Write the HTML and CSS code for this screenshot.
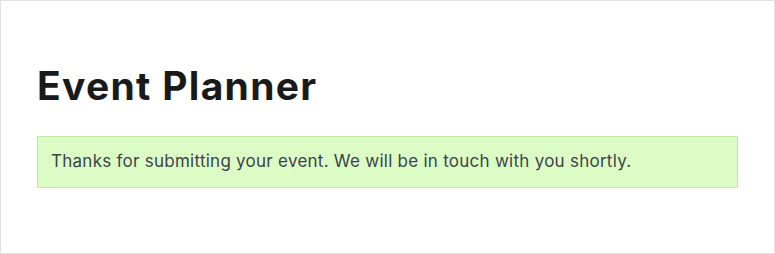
FILE: index.html
```html
<!DOCTYPE html>
<html lang="en">
<head>
<meta charset="utf-8">
<title>Event Planner</title>
<link rel="stylesheet" href="styles.css">
</head>
<body>
<div class="frame">
  <main class="content">
    <h1 class="title">Event Planner</h1>
    <div class="notice">Thanks for submitting your event. We will be in touch with you shortly.</div>
  </main>
</div>
</body>
</html>
```
FILE: styles.css
```css
html, body {
  margin: 0;
  padding: 0;
  height: 100%;
  background: #ffffff;
}
body {
  font-family: Inter, "Noto Sans", sans-serif;
}
.frame {
  box-sizing: border-box;
  height: 254px;
  border: 1px solid #e2e2e2;
  background: #ffffff;
}
.content {
  padding: 61px 36px 0 36px;
}
.title {
  margin: 0 0 26px 0;
  font-size: 39px;
  line-height: 48px;
  font-weight: 650;
  color: #1a1a1a;
  letter-spacing: 1.3px;
}
.notice {
  box-sizing: border-box;
  height: 52px;
  padding: 11px 13px;
  background: #dcfcc6;
  border: 1px solid #c2e8a8;
  color: #3c434a;
  font-size: 17px;
  line-height: 26px;
  letter-spacing: 0.26px;
}
```
